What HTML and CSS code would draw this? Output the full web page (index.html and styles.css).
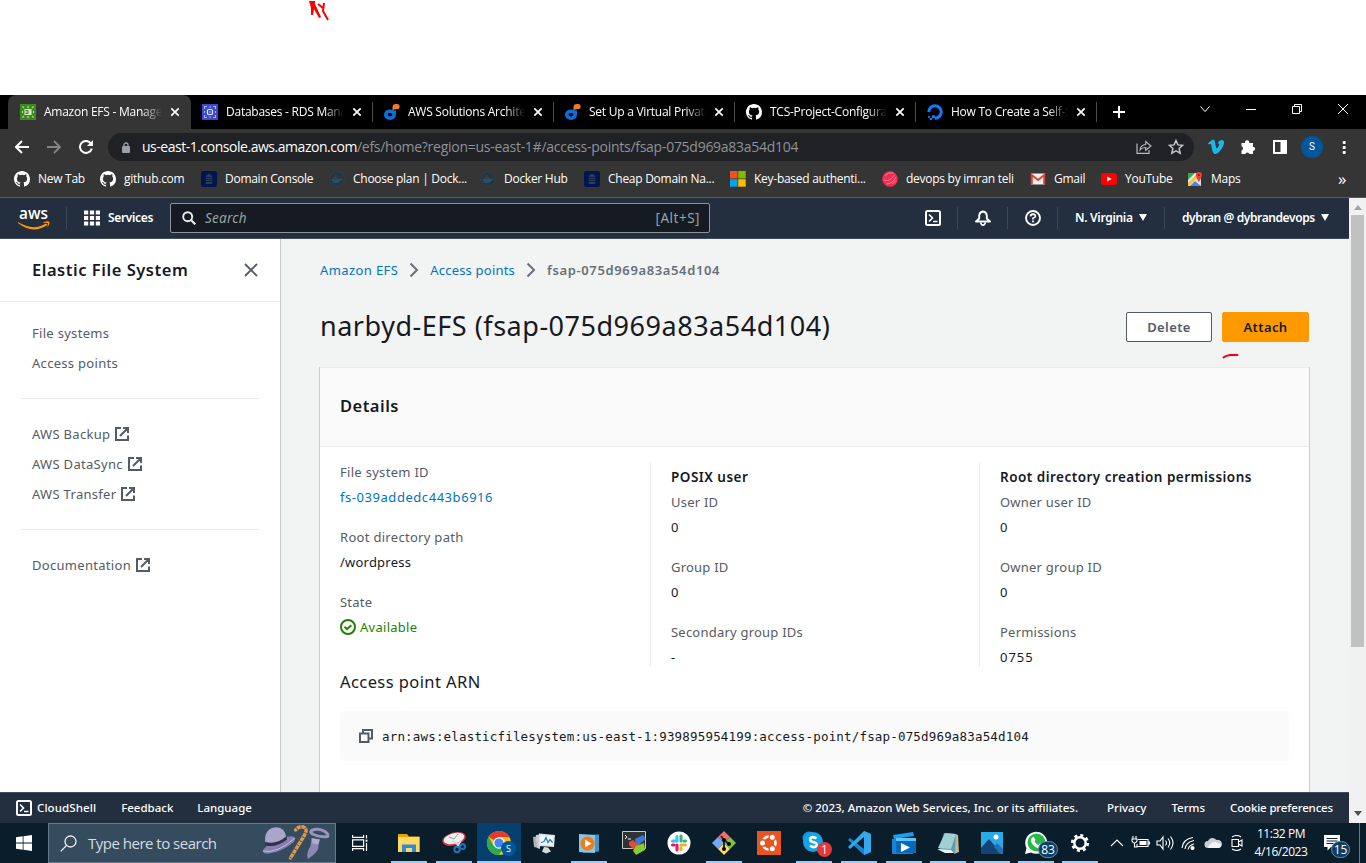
FILE: index.html
```html
<!DOCTYPE html>
<html lang="en">
<head>
<meta charset="utf-8">
<title>Amazon EFS - Management Console</title>
<link rel="stylesheet" href="styles.css">
</head>
<body>
<svg class="defs" aria-hidden="true">
  <symbol id="github" viewBox="0 0 16 16"><path fill="#fff" d="M8 0C3.58 0 0 3.58 0 8c0 3.54 2.29 6.53 5.47 7.59.4.07.55-.17.55-.38 0-.19-.01-.82-.01-1.49-2.01.37-2.53-.49-2.69-.94-.09-.23-.48-.94-.82-1.13-.28-.15-.68-.52-.01-.53.63-.01 1.08.58 1.23.82.72 1.21 1.87.87 2.33.66.07-.52.28-.87.51-1.07-1.78-.2-3.64-.89-3.64-3.95 0-.87.31-1.59.82-2.15-.08-.2-.36-1.02.08-2.12 0 0 .67-.21 2.2.82a7.6 7.6 0 0 1 4 0c1.53-1.04 2.2-.82 2.2-.82.44 1.1.16 1.92.08 2.12.51.56.82 1.27.82 2.15 0 3.07-1.87 3.75-3.65 3.95.29.25.54.73.54 1.48 0 1.07-.01 1.93-.01 2.2 0 .21.15.46.55.38A8.01 8.01 0 0 0 16 8c0-4.42-3.58-8-8-8z"/></symbol>
  <symbol id="close" viewBox="0 0 10 10"><path d="M1.3 1.3l7.4 7.4M8.7 1.3L1.3 8.7" stroke="#fff" stroke-width="1.7" fill="none"/></symbol>
  <symbol id="whizlabs" viewBox="0 0 16 16"><ellipse cx="6" cy="10.700" rx="4.200" ry="3.500" fill="none" stroke="#0b6fe0" stroke-width="3.600"/><path d="M8.500 6.500H12V10H8.500z" fill="#0b6fe0"/><path d="M8.500 6.200V3.400Q8.500 0 12 0h1a2.600 2.600 0 0 1 0 5.200h-1.200Q10.400 5.200 8.500 6.200z" fill="#f47b20"/></symbol>
  <symbol id="docker" viewBox="0 0 16 16"><circle cx="8" cy="8" r="7.300" fill="#2a343a" stroke="#28424f"/><path d="M2.500 8h8.300q1.100-.1 1-1.600.9.500.9 1.200 1 0 1.300.3-.7.900-2 .9-1.600 3.400-5.200 3.400-4 0-4.300-4.200zM4 6.200h1.600v1.300H4zM6 6.200h1.600v1.300H6zM8 6.200h1.600v1.300H8zM6 4.500h1.600v1.300H6z" fill="#26516a"/></symbol>
  <symbol id="domain" viewBox="0 0 16 16"><rect width="16" height="16" rx="2" fill="#00174d"/><path d="M6.500 3h3v1.500h1.700V13H4.800V4.500h1.700z" fill="#2b3c5c"/><path d="M4.800 6.500h6.400M4.800 8.500h6.400M4.800 10.500h6.400" stroke="#00174d" stroke-width=".8"/></symbol>
  <symbol id="external" viewBox="0 0 16 16"><path d="M7 2H2v12h12V9.500M9 2h5v5M14 2L6 10" fill="none" stroke="#545b64" stroke-width="2"/></symbol>
  <symbol id="shell" viewBox="0 0 16 16"><rect x="1" y="1" width="14" height="14" rx="1.500" fill="none" stroke="#fff" stroke-width="2"/><path d="M4 4.500L7.500 8 4 11.500M8 11.500h4.500" fill="none" stroke="#fff" stroke-width="1.600"/></symbol>
  <symbol id="chevron" viewBox="0 0 10 16"><path d="M1.500 1.500L8 8l-6.500 6.500" fill="none" stroke="#687078" stroke-width="2"/></symbol>
</svg>

<div class="blank"></div>

<header class="tabstrip">
  <div class="tab tab-active">
    <svg class="i16" viewBox="0 0 16 16"><rect width="16" height="16" fill="#3f8624"/><path d="M5 5.500h6v5H5zM5 8h6M8 5.500l3 2.500-3 2.500" fill="none" stroke="#d3eebf" stroke-width="1.100"/><path d="M2.500 2.500l1.500 1.500M13.500 2.500L12 4M13.500 13.500L12 12M2.500 13.500L4 12M2.500 7v2M13.500 7v2M7 3h2M7 13h2" fill="none" stroke="#a8d585" stroke-width="1.300"/></svg>
    <span class="tab-title">Amazon EFS - Management</span><svg class="i10"><use href="#close"/></svg>
  </div>
  <div class="tab tab-next">
    <svg class="i16" viewBox="0 0 16 16"><rect width="16" height="16" fill="#3b48cc"/><rect x="5.500" y="5.500" width="5" height="5" rx="1" fill="none" stroke="#e0e4ff" stroke-width="1.200"/><path d="M2.500 5V2.500H5M11 2.500h2.500V5M13.500 11v2.500H11M5 13.500H2.500V11M2.500 7v2M13.500 7v2M7 3h2M7 13h2M8 7v2" fill="none" stroke="#aab5ff" stroke-width="1.100"/></svg>
    <span class="tab-title">Databases - RDS Manage</span><svg class="i10"><use href="#close"/></svg>
  </div>
  <div class="tab"><svg class="i16"><use href="#whizlabs"/></svg><span class="tab-title">AWS Solutions Architect</span><svg class="i10"><use href="#close"/></svg></div>
  <div class="tab"><svg class="i16"><use href="#whizlabs"/></svg><span class="tab-title">Set Up a Virtual Private Cl</span><svg class="i10"><use href="#close"/></svg></div>
  <div class="tab"><svg class="i16"><use href="#github"/></svg><span class="tab-title">TCS-Project-Configuration</span><svg class="i10"><use href="#close"/></svg></div>
  <div class="tab">
    <svg class="i16" viewBox="0 0 16 16"><path d="M8 14.200A6.200 6.200 0 1 0 1.800 8" fill="none" stroke="#0a7cff" stroke-width="3"/><path d="M5 11.300h3v3H5zM2.800 14h2.200v2H2.800zM1 12h1.800v1.800H1z" fill="#0a7cff"/></svg>
    <span class="tab-title">How To Create a Self-Sig</span><svg class="i10"><use href="#close"/></svg>
  </div>
  <svg class="newtab" viewBox="0 0 12 12"><path d="M6 0v12M0 6h12" stroke="#fff" stroke-width="2"/></svg>
  <div class="winctl">
    <svg width="10" height="10" viewBox="0 0 10 10"><path d="M.500 2.500L5 7.500l4.500-5" /></svg>
    <svg width="10" height="10" viewBox="0 0 10 10"><path d="M0 5.500h10"/></svg>
    <svg width="10" height="10" viewBox="0 0 10 10"><path d="M.500 2.500h7v7h-7zM2.500 2.500v-2h7v7h-2"/></svg>
    <svg width="10" height="10" viewBox="0 0 10 10"><path d="M0 0l10 10M10 0L0 10"/></svg>
  </div>
</header>

<div class="toolbar">
  <svg class="nav-ic" viewBox="0 0 14 14"><path d="M14 7H1.500M7 1L1 7l6 6" fill="none" stroke="#fff" stroke-width="2"/></svg>
  <svg class="nav-ic" viewBox="0 0 14 14"><path d="M0 7h12.500M7 1l6 6-6 6" fill="none" stroke="#858585" stroke-width="1.800"/></svg>
  <svg class="nav-ic" viewBox="0 0 14 14"><path d="M12 3.600A6 6 0 1 0 12.800 8.500" fill="none" stroke="#fff" stroke-width="2"/><path d="M14 0v6H8z" fill="#fff"/></svg>
  <div class="omnibox">
    <svg class="lock" viewBox="0 0 8 11"><rect y="4" width="8" height="7" rx="1" fill="#9aa0a6"/><path d="M2 4.500V3a2 2 0 0 1 4 0v1.500" fill="none" stroke="#9aa0a6" stroke-width="1.300"/></svg>
    <span class="url"><b>us-east-1.console.aws.amazon.com</b>/efs/home?region=us-east-1#/access-points/fsap-075d969a83a54d104</span>
    <svg class="share" viewBox="0 0 16 14"><path d="M1 3.500v9.800h12V10" fill="none" stroke="#bbb" stroke-width="1.200"/><path d="M4 10q.5-5 5.700-5.500V1.500L15 6 9.700 10.300V7.500Q6 7.400 4 10z" fill="none" stroke="#bbb" stroke-width="1.100"/></svg>
    <svg class="star" viewBox="0 0 16 16"><path d="M8 1.500l1.900 4.400 4.800.4-3.600 3.200 1.100 4.700L8 11.700l-4.200 2.500 1.100-4.700L1.300 6.300l4.800-.4z" fill="none" stroke="#ccc" stroke-width="1.400"/></svg>
  </div>
  <div class="extensions">
    <svg class="i16" viewBox="0 0 16 16"><path d="M0 4.300L4 1q2.200-1.400 2.900 1.800l1 5q.4 1.700.9 1.700c.8 0 2.900-3.700 2.200-4.700-.4-.6-1.400 0-1.400 0C10.500 2 12.200.9 14 1c1.900.1 2.400 1.700 1.700 4.400C14.600 9.500 9.800 15 7.300 15c-2 0-2.700-2.600-3.300-5.300C3.300 6.800 3.200 4.800 2.500 4.800L.8 5.600z" fill="#1ab7ea"/></svg>
    <svg class="i16" viewBox="0 0 16 16"><path d="M1.500 4H5a2.200 2.200 0 1 1 4.200 0H13v3.700a2.100 2.100 0 0 1 0 4.300v3H9.500a2.200 2.200 0 0 0-4.200 0H1.500v-3.500a2.200 2.200 0 0 0 0-4.200z" fill="#fff"/></svg>
    <svg class="i16" viewBox="0 0 16 16"><path d="M2 2h12v12H2zM9.500 2v12" fill="none" stroke="#fff" stroke-width="2"/><path d="M9.500 2H14v12H9.500z" fill="#fff"/></svg>
    <span class="avatar">S</span>
    <svg class="i16" viewBox="0 0 16 16"><g fill="#fff"><rect x="6.700" y="2" width="3" height="3" rx="1"/><rect x="6.700" y="7" width="3" height="3" rx="1"/><rect x="6.700" y="12" width="3" height="3" rx="1"/></g></svg>
  </div>
</div>

<nav class="bookmarks">
  <span class="bm"><svg class="i16"><use href="#github"/></svg>New Tab</span>
  <span class="bm"><svg class="i16"><use href="#github"/></svg>github.com</span>
  <span class="bm"><svg class="i16"><use href="#domain"/></svg>Domain Console</span>
  <span class="bm"><svg class="i16"><use href="#docker"/></svg>Choose plan | Dock...</span>
  <span class="bm"><svg class="i16"><use href="#docker"/></svg>Docker Hub</span>
  <span class="bm"><svg class="i16"><use href="#domain"/></svg>Cheap Domain Na...</span>
  <span class="bm"><svg class="i16" viewBox="0 0 16 16"><path d="M0 0h7.500v7.500H0z" fill="#f25022"/><path d="M8.200 0h7.500v7.500H8.200z" fill="#7fba00"/><path d="M0 8.200h7.500v7.500H0z" fill="#00a4ef"/><path d="M8.200 8.200h7.500v7.500H8.200z" fill="#ffb900"/></svg>Key-based authenti...</span>
  <span class="bm"><svg class="i16" viewBox="0 0 16 16"><circle cx="8" cy="8" r="7.800" fill="#ee2e55"/><path d="M3 4.500q4-4 8.500-2.500M2 9q5 2.500 10.500-5M4.500 13q6 0 9.500-7M10.500 13l3.500-3.500" fill="none" stroke="#ff8ea3" stroke-width=".8"/></svg>devops by imran teli</span>
  <span class="bm"><svg class="i16" viewBox="0 0 16 16"><path d="M1 2.500h14v11H1z" fill="#f1efef"/><path d="M1.800 13.500V4L8 9l6.200-5v9.500" fill="none" stroke="#db4437" stroke-width="2"/></svg>Gmail</span>
  <span class="bm"><svg class="i16" viewBox="0 0 16 16"><rect y="2" width="16" height="12" rx="3" fill="#f00"/><path d="M6.200 5.500l4.500 2.500-4.500 2.500z" fill="#fff"/></svg>YouTube</span>
  <span class="bm"><svg class="i16" viewBox="0 0 16 16"><path d="M1 2h13v13H1z" fill="#e8e8e8"/><path d="M1 2h7L1 9z" fill="#34a853"/><path d="M1 15V12L11 2l2 2L2 15z" fill="#fbc02d"/><path d="M3 15l5-5 6 5z" fill="#4285f4"/><path d="M8 9l6 5V8z" fill="#ddd"/><path d="M11.800 11Q8.800 6 8.800 4a3 3 0 0 1 6.200 0q0 2-3.200 7z" fill="#ea4335"/><circle cx="11.900" cy="3.900" r="1" fill="#7b1f18"/></svg>Maps</span>
  <span class="bm-more">»</span>
</nav>

<div class="viewport">
  <div class="page">
    <header class="aws-nav">
      <svg class="aws-logo" viewBox="0 0 32 22" role="img"><text x="1" y="11" class="logo-text" textLength="29" lengthAdjust="spacingAndGlyphs">aws</text><path d="M0 14q15 9.500 28 1.500l1.500 1.200Q15 27 0 15z" fill="#f90"/><path d="M25.500 14.200q4.700-1.600 5.800-.5c.8 1-.5 4.200-2 5.600q.8-3 .8-4-.8-1-4.600-.3z" fill="#f90"/></svg>
      <i class="rule rule-logo"></i>
      <svg class="i16 grid-ic" viewBox="0 0 16 16"><path d="M0 2.500h16M0 8h16M0 13.500h16" stroke="#fff" stroke-width="4" stroke-dasharray="4.200 1.700"/></svg>
      <span class="services">Services</span>
      <div class="aws-search"><svg width="14" height="14" viewBox="0 0 14 14"><circle cx="5.700" cy="5.700" r="4.500" fill="none" stroke="#eaeded" stroke-width="1.900"/><path d="M9 9l4.300 4.300" stroke="#eaeded" stroke-width="2.200"/></svg><em>Search</em><span class="kbd">[Alt+S]</span></div>
      <div class="aws-tools">
        <span class="tool tool-ic"><svg class="i16"><use href="#shell"/></svg></span>
        <span class="tool tool-ic"><svg class="i16" viewBox="0 0 16 16"><path d="M1 11.500L4.200 8.500V5.500Q4.500 2 8 1.500q3.500.5 3.800 4v3l3.200 3z" fill="none" stroke="#fff" stroke-width="1.900" stroke-linejoin="round"/><path d="M5.800 12.500q.3 2.600 2.200 2.600t2.200-2.600" fill="none" stroke="#fff" stroke-width="1.700"/></svg></span>
        <span class="tool tool-ic"><svg class="i16" viewBox="0 0 16 16"><circle cx="8" cy="8" r="7" fill="none" stroke="#fff" stroke-width="1.900"/><path d="M5.500 6.400Q5.600 4.300 8 4.200q2.300.1 2.400 2Q10.300 7.400 8 8.300V9.500" fill="none" stroke="#fff" stroke-width="1.700"/><path d="M7.100 10.500h1.800v1.700H7.100z" fill="#fff"/></svg></span>
        <span class="tool region">N. Virginia<i class="caret"></i></span>
        <span class="tool account">dybran @ dybrandevops<i class="caret"></i></span>
      </div>
    </header>

    <div class="body">
      <aside class="sidebar">
        <div class="side-head"><h2>Elastic File System</h2><svg width="14" height="14" viewBox="0 0 14 14"><path d="M1 1l12 12M13 1L1 13" stroke="#545b64" stroke-width="1.900"/></svg></div>
        <ul class="links">
          <li>File systems</li><li>Access points</li>
        </ul>
        <hr>
        <ul class="links">
          <li>AWS Backup<svg class="i16"><use href="#external"/></svg></li>
          <li>AWS DataSync<svg class="i16"><use href="#external"/></svg></li>
          <li>AWS Transfer<svg class="i16"><use href="#external"/></svg></li>
        </ul>
        <hr>
        <ul class="links"><li class="doc">Documentation<svg class="i16"><use href="#external"/></svg></li></ul>
      </aside>

      <main class="content">
        <div class="crumbs"><a>Amazon EFS</a><svg class="crumb-ic"><use href="#chevron"/></svg><a class="ap">Access points</a><svg class="crumb-ic"><use href="#chevron"/></svg><b>fsap-075d969a83a54d104</b></div>
        <div class="title-row">
          <h1>narbyd-EFS (fsap-075d969a83a54d104)</h1>
          <div class="actions"><button class="btn">Delete</button><button class="btn btn-primary">Attach</button>
            <svg class="underline-mark" viewBox="0 0 18 6"><path d="M1.500 4.500Q4 2.500 8 2h7.500" fill="none" stroke="#f00018" stroke-width="2" stroke-linecap="round"/></svg>
          </div>
        </div>
        <section class="card">
          <h3 class="card-head">Details</h3>
          <div class="card-body">
            <div class="cols">
              <dl>
                <dt class="root">File system ID</dt><dd class="link">fs-039addedc443b6916</dd>
                <dt class="root">Root directory path</dt><dd>/wordpress</dd>
                <dt>State</dt><dd class="ok"><svg class="i16" viewBox="0 0 16 16"><circle cx="8" cy="8" r="7" fill="none" stroke="#1d8102" stroke-width="2"/><path d="M4.500 7.800L7 10.200l4.300-4" fill="none" stroke="#1d8102" stroke-width="2"/></svg>Available</dd>
              </dl>
              <dl>
                <dt class="group">POSIX user</dt>
                <dt>User ID</dt><dd>0</dd><dt>Group ID</dt><dd>0</dd><dt>Secondary group IDs</dt><dd>-</dd>
              </dl>
              <dl>
                <dt class="group">Root directory creation permissions</dt>
                <dt>Owner user ID</dt><dd>0</dd><dt>Owner group ID</dt><dd>0</dd><dt>Permissions</dt><dd class="mode">0755</dd>
              </dl>
            </div>
            <h4 class="arn-title">Access point ARN</h4>
            <div class="arn"><svg width="14" height="14" viewBox="0 0 14 14"><path d="M1 4.500h8.500V13H1zM4 4V1h9v8.500h-3" fill="none" stroke="#545b64" stroke-width="2"/></svg><code>arn:aws:elasticfilesystem:us-east-1:939895954199:access-point/fsap-075d969a83a54d104</code></div>
          </div>
        </section>
      </main>
    </div>

    <footer class="aws-foot">
      <svg class="i16"><use href="#shell"/></svg>
      <span class="f-shell">CloudShell</span><span class="f-feed">Feedback</span><span>Language</span>
      <span class="f-copy">© 2023, Amazon Web Services, Inc. or its affiliates.</span><span class="f-priv">Privacy</span><span class="f-terms">Terms</span><span class="f-cookie">Cookie preferences</span>
    </footer>
  </div>
  <div class="scrollbar"><i class="up"></i><i class="thumb"></i><i class="down"></i></div>
</div>

<div class="taskbar">
  <div class="start"><svg class="i16" viewBox="0 0 16 16"><path d="M0 2.300l6.700-1v6.300H0zM7.500 1.200L16 0v7.600H7.500zM0 8.400h6.700v6.300L0 13.700zM7.500 8.400H16V16l-8.500-1.200z" fill="#fff"/></svg></div>
  <div class="win-search">
    <svg width="17" height="17" viewBox="0 0 17 17"><circle cx="10.500" cy="6.500" r="5.500" fill="none" stroke="#f0f0f0" stroke-width="1.300"/><path d="M6.600 10.400L.8 16.200" stroke="#f0f0f0" stroke-width="1.300"/></svg>
    <span>Type here to search</span>
    <svg class="doodle" viewBox="0 0 68 36">
      <ellipse cx="17" cy="20" rx="17.500" ry="5.500" transform="rotate(-24 17 20)" fill="#8580ad"/><path d="M3.500 20Q1 5 12 2.500q10-2 12.500 10Q15 22 3.500 20z" fill="#aaa6cb"/><path d="M3 17q12 3 21.500-6l.5 3.500Q15 23 3 20.500z" fill="#35324f"/><path d="M1 26q14 3 32-13" stroke="#c0bddb" fill="none"/>
      <path d="M28.500 33L42 11q4.500-7-.5-9-5-1-8 3" fill="none" stroke="#d59b59" stroke-width="3.400" stroke-linecap="round"/><path d="M28.500 33L42 11q4.500-7-.5-9-5-1-8 3" fill="none" stroke="#714225" stroke-width="3.400" stroke-dasharray=".8 4"/>
      <path d="M49.500 5.500q7-3 13.500 1 4 3 2.500 5-8 1-14-2-4-2-2-4z" fill="none" stroke="#9994bb" stroke-width="3"/><path d="M49.500 14l8 1.500-1 5q1 6-10.500 13.500-2.500-5 2.500-13z" fill="#8d87b4"/><path d="M49.500 13l8.500 1.500-2 5-5.500-1z" fill="#b0acd0"/>
    </svg>
  </div>
  <div class="taskview"><svg width="16" height="16" viewBox="0 0 16 16" fill="none" stroke="#fff" stroke-width="1.200"><path d="M.600 0v2.400h11V0M.600 16v-2.400h11V16M.600 4.800h11v6.500H.600zM14.500 0v3.500M14.500 8v8"/><path d="M13.500 4.700h2v2h-2z" fill="#fff" stroke="none"/></svg></div>
  <div class="apps">
    <span class="app run"><svg viewBox="0 0 24 24"><path d="M1 3h9l2 2.500h10.500V21H1z" fill="#e5a50a"/><path d="M1 6h21.500v15H1z" fill="#ffd866"/><path d="M5 21v-7.500h14V21h-4v-4H9v4z" fill="#2f8ad8"/></svg></span>
    <span class="app run"><svg viewBox="0 0 24 24"><ellipse cx="12" cy="8" rx="12" ry="6.500" transform="rotate(-15 12 8)" fill="#d9363c"/><ellipse cx="12" cy="7.500" rx="10.500" ry="5.300" transform="rotate(-15 12 7.500)" fill="#eceff2"/><path d="M12 8l4-5M12 8L7 6" stroke="#999" stroke-width="1"/><path d="M10 10l9 5M19 9l-4 7" stroke="#d7dbe0" stroke-width="2"/><circle cx="15" cy="18.500" r="2.700" fill="none" stroke="#1b76bd" stroke-width="2"/><circle cx="20.500" cy="15.500" r="2.500" fill="none" stroke="#1b76bd" stroke-width="2"/></svg></span>
    <span class="app run current"><svg viewBox="0 0 24 24"><circle cx="12" cy="12" r="12" fill="#fbc116"/><path d="M12 12L1.600 6A12 12 0 0 1 22.400 6H12z" fill="#e33b2e"/><path d="M1.600 6A12 12 0 0 0 12 24l5.200-9L12 12 6.800 15z" fill="#2da94f"/><circle cx="12" cy="12" r="5.800" fill="#fff"/><circle cx="12" cy="12" r="4.600" fill="#4285f4"/></svg><i class="badge badge-chrome">S</i></span>
    <span class="app"><svg viewBox="0 0 24 24"><path d="M1 6l6-1v12l-5-1z" fill="#aeb3b6"/><path d="M4 4l4-.5V18l-3-1z" fill="#c9cdcf"/><path d="M7 2.500l16 1.500-1 12-15-1z" fill="#dfe4e5"/><path d="M8.500 4.500L21 5.500l-.8 8.500-11.700-.5z" fill="#f3fafc"/><path d="M9 11.500l3-1 2-4 2 5 2-3 2.500 3" stroke="#2383bd" fill="none" stroke-width="1.300"/><path d="M12 16l4 .5 3 4-5 2-4-2z" fill="#d7dada"/></svg></span>
    <span class="app run"><svg viewBox="0 0 24 24"><path d="M6 4l16-.5v17L6 22z" fill="#4c91bd"/><path d="M2 3l16 1v18L2 21z" fill="#88c6e8"/><circle cx="10.500" cy="12.500" r="7" fill="#f07c16"/><path d="M8 8.500l6.500 4L8 16.500z" fill="#fff"/></svg></span>
    <span class="app"><svg viewBox="0 0 24 24"><path d="M.500.500h23v17H.500z" fill="#303233" stroke="#c7c7c7"/><path d="M3 4l2 2-2 2M6 8h3" stroke="#fff" fill="none"/><path d="M13 8l8-4 3 4-10 8z" fill="#397bd9"/><path d="M7 11l4-2 4 4 3 1-5 6-6-6z" fill="#e34a3a"/><path d="M14 15l8-3 1 7-9 5-3-4z" fill="#87cb2f"/></svg></span>
    <span class="app"><svg viewBox="0 0 24 24"><circle cx="12" cy="12" r="11.500" fill="#fff"/><g stroke-width="3" stroke-linecap="round"><path d="M10 5.500V10M5.500 10H10" stroke="#36c5f0"/><path d="M14 5v5M18.500 10H17" stroke="#2eb67d"/><path d="M14 14h4.500M14 18.500V17" stroke="#ecb22e"/><path d="M5.500 14H7M10 14v5" stroke="#e01e5a"/></g></svg></span>
    <span class="app run"><svg viewBox="0 0 24 24"><path d="M12 0l6 6-6 6-6-6z" fill="#f0716b"/><path d="M18 6l6 6-6 6-6-6z" fill="#80c342"/><path d="M6 6l6 6-6 6-6-6z" fill="#74a8f5"/><path d="M12 12l6 6-6 6-6-6z" fill="#ffd66b"/><path d="M9 5l3 4v9M12 9l5 4" stroke="#202c32" stroke-width="2" fill="none"/><circle cx="12" cy="9" r="2"/><circle cx="17" cy="13" r="2"/><circle cx="12" cy="18" r="2"/></svg></span>
    <span class="app"><svg viewBox="0 0 24 24"><path d="M0 0h24v24H0z" fill="#e95420"/><circle cx="12" cy="12" r="6.500" fill="none" stroke="#fff" stroke-width="2.600"/><g fill="#fff" stroke="#e95420" stroke-width="1.400"><circle cx="5.500" cy="12" r="3.200"/><circle cx="15.300" cy="6.300" r="3.200"/><circle cx="15.300" cy="17.700" r="3.200"/></g></svg></span>
    <span class="app run"><svg viewBox="0 0 24 24"><circle cx="7" cy="7" r="6.500" fill="#0b96dc"/><circle cx="11" cy="11" r="10" fill="#12a5e8"/><path d="M14.500 7.500Q11 5 8.500 7q-1.500 3 2.500 4 5 1 3.500 4-3 2.500-6.500-.5" fill="none" stroke="#fff" stroke-width="2.500"/></svg><i class="badge badge-skype">1</i></span>
    <span class="app run"><svg viewBox="0 0 24 24"><path d="M17 0l7 3v18l-7 3L1 9l2-2 14 11z" fill="#1687cf"/><path d="M17 0l7 3v18l-7 3V6L3 18l-2-2z" fill="#35a8ec"/><path d="M17 7v10l-6-5z" fill="#0b202e"/></svg></span>
    <span class="app run"><svg viewBox="0 0 24 24"><path d="M1 4l20-3 1 4L2 8z" fill="#1c9ded"/><path d="M0 8h21v15H0z" fill="#1284d9"/><path d="M4 7h20v15H4z" fill="#0869bc"/><path d="M4 7h20v3H4z" fill="#61c5f5"/><path d="M9 12l9 4.500L9 21z" fill="#fff"/></svg></span>
    <span class="app app-s run"><svg viewBox="0 0 24 24"><path d="M19 3l3 1 1 17-5 2z" fill="#c5b79c"/><path d="M8 2l12 1-1 19-16-3z" fill="#5f9fab"/><path d="M9 2l11 1-5 15-13-1z" fill="#9ed0d6"/><path d="M1 18l14 1 3 3H9z" fill="#edf3f3"/></svg></span>
    <span class="app app-s run"><svg viewBox="0 0 24 24"><path d="M1 1h22v22H1z" fill="#2aa9e8"/><path d="M1 17L9 8l13 15H1z" fill="#154375"/><path d="M14 16l3-4 6 6v5h-3z" fill="#2770b0"/><circle cx="16" cy="6" r="2.500" fill="#fff"/></svg></span>
    <span class="app app-s run"><svg viewBox="0 0 24 24"><path d="M1 23l1.500-6A11 11 0 1 1 7 21.500z" fill="#fff"/><circle cx="12.500" cy="11.500" r="9" fill="#28b84a"/><path d="M8 6.500l2-.5 1.500 3-1 1.500q1.500 2.500 4 3.500l1.500-1.500 3 1.500q0 3-3 3.500-7-1-9-7-.2-2.500 1-4z" fill="#fff"/></svg><i class="badge badge-wa">83</i></span>
    <span class="app app-s run"><svg viewBox="0 0 24 24"><circle cx="12" cy="12" r="7.600" fill="none" stroke="#fff" stroke-width="3" stroke-dasharray="3 2.970"/><circle cx="12" cy="12" r="5.700" fill="none" stroke="#fff" stroke-width="2.500"/></svg></span>
  </div>
  <div class="tray">
    <svg viewBox="0 0 20 16"><path d="M4 11l6-6 6 6"/></svg>
    <svg viewBox="0 0 20 16"><path d="M7 4.500h10v7H6V9M17.500 7h1v2h-1"/><path d="M8.500 6h7v4h-7z" fill="#fff" stroke="none"/><path d="M2 1v3M5 1v3M1 4h5v2q-1 2-2.500 2T1 6zM3.500 8v4h3"/></svg>
    <svg viewBox="0 0 20 16"><path d="M2 6h3l3-4v12l-3-4H2zM10.500 5.500q2 2.500 0 5M13 3.500q3.500 4.500 0 9M15.500 1.500q5 6.500 0 13"/></svg>
    <svg viewBox="0 0 20 16"><path d="M3 13Q4 4 14 2.500M6 14q1-7 9-8.500M9 14.500q1-4.500 6-5.500"/><circle cx="13.500" cy="13" r="1.500" fill="#fff"/></svg>
    <svg viewBox="0 0 20 16"><path d="M5 13a3.500 3.500 0 0 1 0-7 5 5 0 0 1 8.500-1A4 4 0 0 1 16 13z" fill="#c9ced2" stroke="none"/><path d="M5 13q1-5 7-6.500l6 3Q18 13 15 13z" fill="#f2f2f2" stroke="none"/></svg>
    <svg class="cam" viewBox="0 0 20 16"><path d="M5 4.500h6.500v7H5zM11.500 7L15 5v6l-3.500-2M5 2q5-3 9 0M5 14q5 3 9 0"/></svg>
  </div>
  <div class="clock"><span class="time">11:32 PM</span><span class="date">4/16/2023</span></div>
  <div class="notice"><svg viewBox="0 0 16 16"><path d="M0 0h16v12H7l-3.500 3.500V12H0z" fill="#fff"/><path d="M2.500 3.500h11M2.500 6h11M2.500 8.500h7" stroke="#0b202e" stroke-width="1"/></svg><i class="badge badge-note">15</i></div>
</div>

<svg class="scribble" viewBox="0 0 22 22"><path d="M1 1h6v3l6 13-2 1-5-9-1 6H3V8z" fill="#f00"/><path d="M10 4l5 4M16 3l-1 8 5 9" fill="none" stroke="#f00" stroke-width="2"/></svg>
</body>
</html>
```
FILE: styles.css
```css
* { box-sizing: border-box; }
body { margin: 0; width: 1366px; height: 863px; overflow: hidden; display: flex; flex-direction: column; background: #fff; font-family: "Noto Sans", "Open Sans", sans-serif; font-size: 13px; color: #16191f; white-space: nowrap; }
h1, h2, h3, h4, dl, dd, ul { margin: 0; padding: 0; }
svg { flex: none; display: block; }
.defs { position: absolute; width: 0; height: 0; }
.i16 { width: 16px; height: 16px; }
.i10 { width: 10px; height: 10px; }
.blank { height: 95px; flex: none; }

/* Browser chrome */
.tabstrip { height: 34px; flex: none; background: #000; display: flex; align-items: center; font: 12px "Open Sans", sans-serif; color: #fff; }
.tab { width: 181px; height: 34px; display: flex; align-items: center; padding: 0 10px 0 12px; position: relative; }
.tab::after { content: ""; position: absolute; right: -1px; top: 7px; width: 1px; height: 20px; background: #4a4a4a; }
.tab-active { width: 183px; margin-left: 8px; padding-right: 11px; background: #353535; border-radius: 8px 8px 0 0; }
.tab-active::after { display: none; }
.tab-next { padding-left: 11px; }
.tab-title { flex: 1; min-width: 0; overflow: hidden; margin: -2px 8px 0; letter-spacing: -0.25px; mask-image: linear-gradient(90deg, #000 calc(100% - 20px), transparent); }
.newtab { width: 12px; height: 12px; margin-left: 17px; }
.winctl { display: flex; gap: 36px; margin: -6px 18px 0 auto; }
.winctl svg { fill: none; stroke: #fff; stroke-width: 1; }
.toolbar { height: 36px; flex: none; background: #353535; display: flex; align-items: center; padding-left: 15px; }
.nav-ic { width: 14px; height: 14px; margin-right: 18px; }
.omnibox { margin-left: -3px; width: 1086px; height: 28px; border-radius: 14px; background: #202124; display: flex; align-items: center; padding: 0 10px 0 14px; }
.lock { width: 8px; height: 11px; }
.url { flex: 1; margin: -1px 0 0 12px; font: 14px "Open Sans", sans-serif; color: #8f9296; letter-spacing: -0.27px; }
.url b { font-weight: 400; color: #fff; letter-spacing: -0.47px; }
.share { width: 16px; height: 14px; margin-right: 16px; }
.star { width: 16px; height: 16px; }
.extensions { display: flex; align-items: center; gap: 16px; margin-left: 14px; }
.avatar { width: 22px; height: 22px; margin: 0 -3px; border-radius: 50%; background: #01579b; color: #fff; font: 10px/22px Roboto, sans-serif; text-align: center; }
.bookmarks { height: 33px; flex: none; background: #353535; border-bottom: 1px solid #5c5c5c; display: grid; grid-template-columns: 86px 101px 128px 151px 104px 146px 152px 148px 71px 86px 151px auto; align-items: center; padding: 0 0 5px 14px; font: 12px "Open Sans", sans-serif; color: #fff; letter-spacing: -0.27px; }
.bm { display: flex; align-items: center; gap: 8px; }
.bm-more { font-size: 17px; line-height: 20px; }

/* Web page area */
.viewport { height: 625px; flex: none; display: flex; }
.page { width: 1349px; display: flex; flex-direction: column; }
.aws-nav { height: 41px; flex: none; background: #232f3e; border-bottom: 1px solid #414d5c; display: flex; align-items: center; color: #fff; padding-left: 18px; }
.aws-logo { width: 32px; height: 22px; margin-top: 2px; }
.logo-text { font: 600 16px "Open Sans", sans-serif; fill: #fff; }
.rule { width: 1px; height: 22px; background: #3d4856; margin: 0 17px 0 16px; }
.services { font-weight: 600; font-size: 12px; margin: -1px 0 0 8px; width: 62px; letter-spacing: -0.35px; }
.aws-search { width: 540px; height: 30px; border: 1px solid #8d9499; border-radius: 2px; background: #161a22; display: flex; align-items: center; padding: 0 9px 0 11px; color: #95a5a6; font-size: 13.5px; }
.aws-search em { margin-left: 9px; flex: 1; letter-spacing: 0.25px; }
.kbd { letter-spacing: 0.5px; }
.aws-tools { margin-left: auto; display: flex; font-weight: 600; font-size: 12px; letter-spacing: -0.4px; line-height: 20px; }
.tool { height: 22px; display: flex; align-items: center; border-left: 1px solid #3d4856; padding-bottom: 1px; }
.tool-ic { width: 50px; justify-content: center; padding-bottom: 0; }
.tool-ic:first-child { border: 0; padding-left: 2px; }
.caret { border: 4.5px solid transparent; border-top: 7px solid #fff; border-bottom: 0; margin-left: 6px; }
.region { width: 107px; padding-left: 17px; letter-spacing: -0.3px; }
.account { width: 185px; padding-left: 17px; }
.body { flex: 1; min-height: 0; display: flex; }
.sidebar { width: 281px; background: #fff; border-right: 1px solid #c4cacb; color: #545b64; }
.side-head { height: 63px; border-bottom: 1px solid #eaeded; display: flex; align-items: center; justify-content: space-between; padding: 0 22px 0 32px; margin-bottom: 16px; }
.side-head h2 { font-size: 16.5px; font-weight: 600; color: #16191f; letter-spacing: 0.53px; margin-top: -2px; }
.links { list-style: none; padding-left: 32px; letter-spacing: 0.3px; }
.links li { height: 30px; display: flex; align-items: center; gap: 4px; }
.sidebar hr { border: 0; height: 1px; background: #eaeded; margin: 20px; }
.content { width: 1068px; background: #f2f3f3; padding: 21px 40px 0 39px; overflow: hidden; }
.crumbs { display: flex; align-items: center; height: 20px; color: #0073bb; letter-spacing: 0.4px; }
.ap { letter-spacing: 0.2px; }
.crumb-ic { width: 10px; height: 16px; margin: 0 11px; }
.crumbs b { color: #687078; font-weight: 600; letter-spacing: 0.63px; }
.title-row { display: flex; justify-content: space-between; align-items: center; height: 30px; margin-top: 32px; }
h1 { font-weight: 400; font-size: 27px; line-height: 30px; letter-spacing: 0.52px; margin-top: -2px; }
.actions { display: flex; gap: 10px; position: relative; }
.btn { width: 86px; height: 30px; border: 1px solid #545b64; border-radius: 2px; background: #fff; color: #545b64; font: 600 13px "Noto Sans", sans-serif; padding: 0; letter-spacing: 0.4px; }
.btn-primary { width: 87px; background: #f90; border-color: #f90; color: #16191f; }
.underline-mark { position: absolute; width: 18px; height: 6px; left: 96px; top: 41px; }
.card { height: 440px; margin-top: 25px; background: #fff; border-top: 1px solid #eaeded; box-shadow: -1px 0 #c9cecf, 1px 0 #c9cecf; }
.card-head { height: 79px; line-height: 76px; background: #fafafa; border-bottom: 1px solid #eaeded; padding-left: 20px; font-size: 16.5px; font-weight: 600; letter-spacing: 0.48px; }
.card-body { padding: 15px 20px 0; }
.cols { display: grid; grid-template-columns: 310px 329px 1fr; height: 205px; letter-spacing: 0.22px; }
.cols dl { line-height: 20px; }
.cols dl + dl { border-left: 1px solid #eaeded; padding: 5px 0 0 20px; }
dt { color: #545b64; margin-bottom: 5px; }
.root { letter-spacing: 0.3px; }
.group { font-size: 13.5px; font-weight: 600; color: #16191f; letter-spacing: 0.48px; }
dd { margin-bottom: 20px; height: 20px; }
dd:last-child { margin-bottom: 0; }
.link { color: #0073bb; letter-spacing: 0.55px; }
.mode { letter-spacing: 1px; }
.ok { color: #1d8102; display: flex; align-items: center; gap: 4px; letter-spacing: 0.27px; }
.arn-title { font-weight: 400; font-size: 16.5px; line-height: 20px; margin: 5px 0 19px; letter-spacing: 0.42px; }
.arn { height: 50px; border-radius: 5px; background: #fafafa; display: flex; align-items: center; padding-left: 19px; }
.arn code { margin-left: 9px; font: 12.5px "DejaVu Sans Mono", monospace; letter-spacing: 0.175px; }
.aws-foot { height: 31px; flex: none; background: #232f3e; border-top: 1px solid #414d5c; display: flex; align-items: center; padding: 0 16px 2px; color: #fff; font-size: 11.5px; font-weight: 500; }
.aws-foot svg { margin-top: 2px; }
.f-shell { margin: 0 25px 0 5px; letter-spacing: 0.1px; }
.f-feed { margin-right: 24px; }
.f-copy { margin-left: auto; }
.f-priv { margin-left: 29px; }
.f-terms { margin: 0 25px; }
.f-cookie { letter-spacing: -0.16px; }
.scrollbar { width: 17px; background: #f1f1f1; display: flex; flex-direction: column; align-items: center; padding: 7px 0; }
.up, .down { border: 4px solid transparent; }
.up { border-top: 0; border-bottom: 5px solid #a3a3a3; }
.thumb { width: 13px; height: 432px; background: #c1c1c1; margin-top: 5px; }
.down { border-bottom: 0; border-top: 5px solid #505050; margin-top: auto; }

/* Desktop taskbar */
.taskbar { height: 40px; flex: none; background: #0a1d2b; display: flex; align-items: center; color: #fff; }
.start { width: 48px; display: flex; justify-content: center; }
.win-search { width: 288px; height: 40px; background: #354c5f; border: 1px solid #66798a; display: flex; align-items: center; padding: 0 5px 0 11px; font: 15px "Open Sans", sans-serif; color: #d5dbe0; }
.win-search span { margin-left: 11px; flex: 1; letter-spacing: -0.5px; }
.doodle { width: 68px; height: 36px; }
.taskview { width: 50px; padding-left: 16px; }
.apps { display: flex; }
.app { width: 45px; height: 40px; display: flex; align-items: center; justify-content: center; position: relative; }
.app-s { width: 44px; }
.app svg { width: 24px; height: 24px; }
.app.run { background: linear-gradient(#9ccbf5, #9ccbf5) center bottom / 36px 2px no-repeat; }
.app.current { background: linear-gradient(#9ccbf5, #9ccbf5) center bottom / 44px 2px no-repeat, linear-gradient(#053f6d, #053f6d) center / 44px 40px no-repeat; }
.badge { position: absolute; border-radius: 10px; font: 10px/15px "Open Sans", sans-serif; text-align: center; color: #fff; }
.badge-chrome { width: 15px; height: 15px; left: 25px; top: 18px; background: #01579b; font-size: 9px; }
.badge-skype { width: 15px; height: 15px; left: 26px; top: 19px; background: #e53935; font-size: 12px; }
.badge-wa { width: 20px; height: 17px; right: 0; top: 18px; background: #0d3f66; border: 1px solid #72869a; font-size: 12px; }
.badge-note { width: 19px; height: 17px; left: 7px; top: 18px; background: #0d3f66; border: 1px solid #72869a; font-size: 12px; }
.tray { display: flex; gap: 4px; margin-left: 5px; }
.tray svg { width: 20px; height: 16px; fill: none; stroke: #fff; stroke-width: 1.1; }
.clock { width: 66px; display: flex; flex-direction: column; align-items: center; margin-left: 1px; font: 12px/18px "Open Sans", sans-serif; letter-spacing: -0.45px; }
.notice { margin-left: 10px; position: relative; width: 36px; border-right: 1px solid #66798a; height: 40px; padding-top: 12px; }
.notice svg { width: 16px; height: 16px; }
.scribble { position: absolute; left: 308px; top: 0; width: 22px; height: 22px; }
```
